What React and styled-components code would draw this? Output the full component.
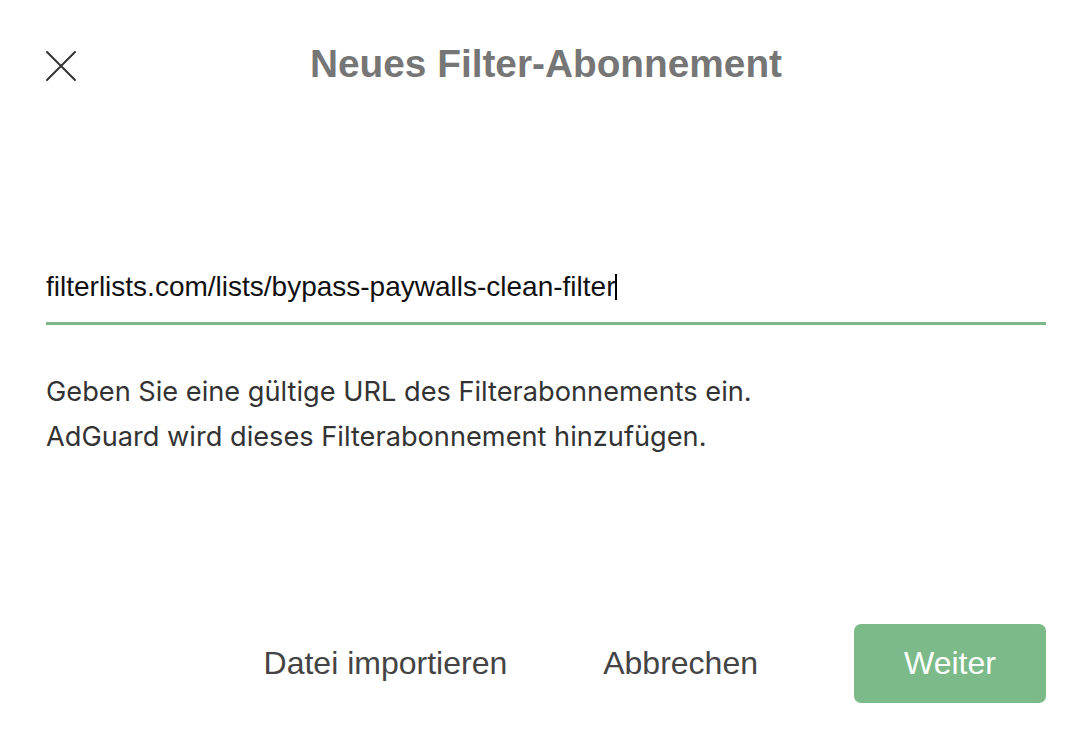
import React from 'react';
import styled, { createGlobalStyle } from 'styled-components';

const Global = createGlobalStyle`
  html, body {
    margin: 0;
    padding: 0;
    background: #fff;
  }
`;

const Dialog = styled.div`
  box-sizing: border-box;
  width: 1076px;
  height: 736px;
  padding: 46px 30px 33px 46px;
  display: flex;
  flex-direction: column;
  font-family: "Liberation Sans", Arial, sans-serif;
`;

const Header = styled.div`
  display: grid;
  grid-template-columns: 40px 1fr 40px;
  align-items: center;
  height: 40px;
`;

const CloseButton = styled.button`
  width: 32px;
  height: 32px;
  padding: 0;
  border: none;
  background: none;
  cursor: pointer;
  display: flex;
  align-items: center;
  justify-content: center;
  margin-left: -1px;
  margin-top: 0;
`;

const Title = styled.h1`
  margin: -4px 0 0;
  text-align: center;
  font-size: 38.8px;
  font-weight: 700;
  color: #767676;
`;

const Field = styled.div`
  margin-top: 184px;
  border-bottom: 3px solid #7cb887;
  padding-bottom: 18px;
`;

const Value = styled.div`
  font-family: "Liberation Sans", Arial, sans-serif;
  font-size: 28px;
  line-height: 34px;
  color: #111;
  white-space: nowrap;
`;

const Caret = styled.span`
  display: inline-block;
  width: 2px;
  height: 26px;
  background: #000;
  vertical-align: -4px;
`;

const Hint = styled.p`
  margin: 44px 0 0;
  font-family: Inter, "Open Sans", sans-serif;
  font-size: 27.2px;
  line-height: 45px;
  color: #333;
`;

const Footer = styled.div`
  margin-top: auto;
  display: flex;
  justify-content: flex-end;
  align-items: center;
`;

const TextButton = styled.button`
  border: none;
  background: none;
  padding: 0;
  font-family: "Liberation Sans", Arial, sans-serif;
  font-size: 32px;
  color: #444;
  cursor: pointer;
  margin-right: ${p => p.$gap}px;
`;

const PrimaryButton = styled.button`
  width: 192px;
  height: 79px;
  border: none;
  border-radius: 7px;
  background: #7cba89;
  color: #fff;
  font-family: "Liberation Sans", Arial, sans-serif;
  font-size: 32px;
  cursor: pointer;
`;

const CloseIcon = () => (
  <svg width="32" height="32" viewBox="0 0 32 32" fill="none" stroke="#333" strokeWidth="2" strokeLinecap="round">
    <path d="M2 2 L30 30 M30 2 L2 30" />
  </svg>
);

export default function App() {
  return (
    <>
      <Global />
      <Dialog>
        <Header>
          <CloseButton aria-label="Schließen"><CloseIcon /></CloseButton>
          <Title>Neues Filter-Abonnement</Title>
          <span />
        </Header>
        <Field>
          <Value role="textbox">
            filterlists.com/lists/bypass-paywalls-clean-filter<Caret />
          </Value>
        </Field>
        <Hint>
          Geben Sie eine gültige URL des Filterabonnements ein.<br />
          AdGuard wird dieses Filterabonnement hinzufügen.
        </Hint>
        <Footer>
          <TextButton $gap={96}>Datei importieren</TextButton>
          <TextButton $gap={96}>Abbrechen</TextButton>
          <PrimaryButton>Weiter</PrimaryButton>
        </Footer>
      </Dialog>
    </>
  );
}
